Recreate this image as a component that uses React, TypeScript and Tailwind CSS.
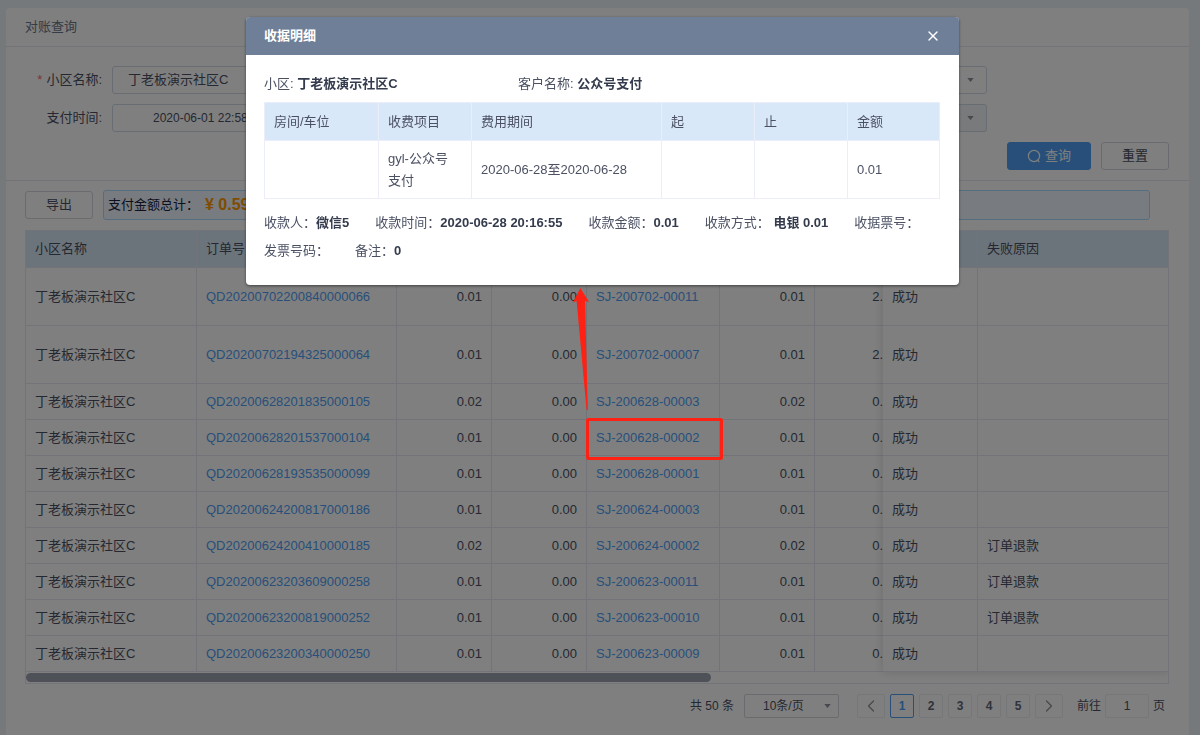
import { ChevronLeft, ChevronRight, X } from 'lucide-react';
import type { ReactNode } from 'react';
import { cva } from 'class-variance-authority';
import clsx from 'clsx';

type Order = {
    orderNo: string;
    amount: string;
    receiptNo: string;
    paid: string;
    fee: string;
    reason?: string;
    tall?: boolean;
};

const COMMUNITY = '丁老板演示社区C';

const orders: Order[] = [
    { orderNo: 'QD20200702200840000066', amount: '0.01', receiptNo: 'SJ-200702-00011', paid: '0.01', fee: '2.', tall: true },
    { orderNo: 'QD20200702194325000064', amount: '0.01', receiptNo: 'SJ-200702-00007', paid: '0.01', fee: '2.', tall: true },
    { orderNo: 'QD20200628201835000105', amount: '0.02', receiptNo: 'SJ-200628-00003', paid: '0.02', fee: '0.' },
    { orderNo: 'QD20200628201537000104', amount: '0.01', receiptNo: 'SJ-200628-00002', paid: '0.01', fee: '0.' },
    { orderNo: 'QD20200628193535000099', amount: '0.01', receiptNo: 'SJ-200628-00001', paid: '0.01', fee: '0.' },
    { orderNo: 'QD20200624200817000186', amount: '0.01', receiptNo: 'SJ-200624-00003', paid: '0.01', fee: '0.' },
    { orderNo: 'QD20200624200410000185', amount: '0.02', receiptNo: 'SJ-200624-00002', paid: '0.02', fee: '0.', reason: '订单退款' },
    { orderNo: 'QD20200623203609000258', amount: '0.01', receiptNo: 'SJ-200623-00011', paid: '0.01', fee: '0.', reason: '订单退款' },
    { orderNo: 'QD20200623200819000252', amount: '0.01', receiptNo: 'SJ-200623-00010', paid: '0.01', fee: '0.', reason: '订单退款' },
    { orderNo: 'QD20200623200340000250', amount: '0.01', receiptNo: 'SJ-200623-00009', paid: '0.01', fee: '0.' },
];

const buttonVariants = cva(
    'flex h-7 items-center justify-center rounded-[3px] border',
    {
        variants: {
            variant: {
                default: 'w-[68px] border-[#d4d7de] bg-white text-[#4b5163]',
                primary: 'w-[84px] gap-1 border-[#4f9ff5] bg-[#4f9ff5] text-white',
            },
        },
        defaultVariants: { variant: 'default' },
    },
);

const cellVariants = cva(
    'overflow-hidden border-b border-[#e6e9f2] font-normal whitespace-nowrap',
    {
        variants: {
            align: {
                left: 'border-r px-[9px] text-left',
                right: 'border-r px-[9px] text-right',
                edge: 'text-right',
            },
            size: { head: 'h-[37px] bg-[#d9e8f6]', normal: 'h-9', tall: 'h-[58px]' },
        },
        defaultVariants: { align: 'left', size: 'normal' },
    },
);

function rowSize(order: Order) {
    return order.tall ? 'tall' : 'normal';
}

function Caret({ className }: { className?: string }) {
    return (
        <svg
            viewBox="0 0 8 5"
            className={clsx('pointer-events-none absolute top-1/2 h-[4px] w-[7px] -translate-y-1/2', className)}
        >
            <path d="M0 0h8L4 5z" fill="#8d929c" />
        </svg>
    );
}

function QueryForm() {
    return (
        <form className="border-b border-[#e6e9ee] pt-[19px] pr-5 pb-[10px] pl-[19px]">
            <div className="flex flex-col gap-[10px] pr-[182px]">
                <div className="flex items-center gap-[10px]">
                    <label htmlFor="community" className="w-[77px] text-right">
                        <span className="mr-1 text-[#f56c6c]">*</span>
                        小区名称:
                    </label>
                    <select
                        id="community"
                        className="h-7 min-w-0 flex-1 appearance-none rounded-[3px] border border-[#cfdae4] bg-white pl-[15px]"
                    >
                        <option>{COMMUNITY}</option>
                    </select>
                    <div className="relative flex flex-1">
                        <select
                            aria-label="支付状态"
                            className="h-7 w-full appearance-none rounded-[3px] border border-[#cfdae4] bg-white"
                        />
                        <Caret className="right-[13px]" />
                    </div>
                </div>

                <div className="flex items-center gap-[10px]">
                    <label htmlFor="pay-time" className="w-[77px] text-right">
                        支付时间:
                    </label>
                    <input
                        id="pay-time"
                        readOnly
                        value="2020-06-01 22:58"
                        className="h-7 min-w-0 flex-1 rounded-[3px] border border-[#cfdae4] bg-white pl-10 text-xs"
                    />
                    <div className="relative flex flex-1">
                        <select
                            disabled
                            aria-label="支付方式"
                            className="h-7 w-full appearance-none rounded-[3px] border border-[#cfdae4] bg-[#f2f4f7]"
                        />
                        <Caret className="right-[13px]" />
                    </div>
                </div>
            </div>

            <div className="mt-[10px] flex justify-end gap-[10px]">
                <button type="button" className={buttonVariants({ variant: 'primary' })}>
                    <svg viewBox="0 0 14 14" className="size-[14px]" fill="none" stroke="currentColor" strokeWidth="1.2">
                        <circle cx="7" cy="7" r="5.6" />
                        <path d="M10.2 10.6l2 2.4" />
                    </svg>
                    查询
                </button>
                <button type="button" className={buttonVariants()}>
                    重置
                </button>
            </div>
        </form>
    );
}

function OrdersTable() {
    return (
        <div className="mt-[10px] border border-[#e6e9f2]">
            <div className="flex">
                <div className="min-w-0 flex-1">
                    <table className="w-full table-fixed border-separate border-spacing-0">
                        <colgroup>
                            <col className="w-[171px]" />
                            <col className="w-[200px]" />
                            <col className="w-[95px]" />
                            <col className="w-[95px]" />
                            <col className="w-[133px]" />
                            <col className="w-[95px]" />
                            <col />
                        </colgroup>
                        <thead>
                            <tr>
                                <th className={cellVariants({ size: 'head' })}>小区名称</th>
                                <th className={cellVariants({ size: 'head' })}>订单号</th>
                                <th className={cellVariants({ size: 'head' })} />
                                <th className={cellVariants({ size: 'head' })} />
                                <th className={cellVariants({ size: 'head' })} />
                                <th className={cellVariants({ size: 'head' })} />
                                <th className={cellVariants({ size: 'head', align: 'edge' })} />
                            </tr>
                        </thead>
                        <tbody>
                            {orders.map((order) => {
                                const size = rowSize(order);

                                return (
                                    <tr key={order.orderNo}>
                                        <td className={cellVariants({ size })}>{COMMUNITY}</td>
                                        <td className={cellVariants({ size })}>
                                            <a href="#order" className="text-[#4f9ff5]">
                                                {order.orderNo}
                                            </a>
                                        </td>
                                        <td className={cellVariants({ size, align: 'right' })}>{order.amount}</td>
                                        <td className={cellVariants({ size, align: 'right' })}>0.00</td>
                                        <td className={cellVariants({ size })}>
                                            <a href="#receipt" className="text-[#4f9ff5]">
                                                {order.receiptNo}
                                            </a>
                                        </td>
                                        <td className={cellVariants({ size, align: 'right' })}>{order.paid}</td>
                                        <td className={cellVariants({ size, align: 'edge' })}>{order.fee}</td>
                                    </tr>
                                );
                            })}
                        </tbody>
                    </table>
                </div>

                {/* columns pinned to the right edge */}
                <div className="w-[285px] shadow-[0_0_10px_rgba(0,0,0,0.15)] [clip-path:inset(0_0_-12px_-12px)]">
                    <table className="w-full table-fixed border-separate border-spacing-0">
                        <colgroup>
                            <col className="w-[95px]" />
                            <col />
                        </colgroup>
                        <thead>
                            <tr>
                                <th className={cellVariants({ size: 'head' })} />
                                <th className={clsx(cellVariants({ size: 'head' }), 'border-r-0')}>失败原因</th>
                            </tr>
                        </thead>
                        <tbody>
                            {orders.map((order) => (
                                <tr key={order.orderNo}>
                                    <td className={cellVariants({ size: rowSize(order) })}>成功</td>
                                    <td className={clsx(cellVariants({ size: rowSize(order) }), 'border-r-0')}>
                                        {order.reason}
                                    </td>
                                </tr>
                            ))}
                        </tbody>
                    </table>
                </div>
            </div>

            <div className="h-[11px] pt-px">
                <div className="h-[9px] w-3/5 rounded-full bg-[#9da3b1]" />
            </div>
        </div>
    );
}

const pagerButton = 'flex h-6 items-center justify-center rounded-[2px] border';

function Pagination() {
    return (
        <nav className="mt-[10px] flex items-center justify-end pr-1 text-xs">
            <span>共 50 条</span>
            <div className="relative ml-[10px] flex">
                <select
                    aria-label="每页条数"
                    className="h-6 w-[95px] appearance-none rounded-[2px] border border-[#d4d7de] bg-white pl-[18px]"
                >
                    <option>10条/页</option>
                </select>
                <Caret className="right-2" />
            </div>

            <div className="ml-[18px] flex gap-[5px] font-bold">
                <button type="button" aria-label="上一页" className={clsx(pagerButton, 'w-7 border-[#eceef2]')}>
                    <ChevronLeft className="size-5 text-[#8d929c]" strokeWidth={1.5} />
                </button>
                {[1, 2, 3, 4, 5].map((page) => (
                    <button
                        key={page}
                        type="button"
                        className={clsx(
                            pagerButton,
                            'w-6',
                            page === 1 ? 'border-[#4f9ff5] text-[#4f9ff5]' : 'border-[#eceef2] text-[#606778]',
                        )}
                    >
                        {page}
                    </button>
                ))}
                <button type="button" aria-label="下一页" className={clsx(pagerButton, 'w-7 border-[#eceef2]')}>
                    <ChevronRight className="size-5 text-[#8d929c]" strokeWidth={1.5} />
                </button>
            </div>

            <label htmlFor="page" className="ml-[14px]">
                前往
            </label>
            <input
                id="page"
                defaultValue="1"
                className="mx-1 h-6 w-11 rounded-[2px] border border-[#eceef2] bg-white text-center"
            />
            <span>页</span>
        </nav>
    );
}

function Field({ label, children }: { label: string; children?: ReactNode }) {
    return (
        <span className="whitespace-nowrap">
            {label}
            {children && <b className="text-[#343b4d]">{children}</b>}
        </span>
    );
}

const receiptHead = 'h-[38px] border-r border-b border-[#ebeef8] pl-[9px] text-left font-normal';
const receiptCell = 'h-[58px] border-r border-b border-[#ebeef8] pr-4 pl-[9px]';

function ReceiptDialog() {
    return (
        <div className="fixed inset-0 flex items-start justify-center bg-black/50 pt-[17px] pl-[5px]">
            <section
                role="dialog"
                aria-labelledby="receipt-title"
                className="w-[713px] overflow-hidden rounded-[4px] bg-white pb-5 text-[#4b5163] shadow-[0_1px_3px_rgba(0,0,0,0.5)]"
            >
                <header className="flex h-[38px] items-center justify-between bg-[#707f98] px-[18px] text-white">
                    <h2 id="receipt-title" className="font-bold">
                        收据明细
                    </h2>
                    <button type="button" aria-label="关闭">
                        <X className="size-4" strokeWidth={2} />
                    </button>
                </header>

                <div className="pt-[19px] pr-[19px] pl-[18px]">
                    <div className="flex h-5 items-center">
                        <div className="w-[254px]">
                            小区: <b className="text-[#343b4d]">{COMMUNITY}</b>
                        </div>
                        <div>
                            客户名称: <b className="text-[#343b4d]">公众号支付</b>
                        </div>
                    </div>

                    <table className="mt-2 w-full table-fixed border-separate border-spacing-0 border-t border-l border-[#ebeef8] leading-[22px]">
                        <colgroup>
                            <col className="w-[114px]" />
                            <col className="w-[93px]" />
                            <col className="w-[190px]" />
                            <col className="w-[93px]" />
                            <col className="w-[93px]" />
                            <col />
                        </colgroup>
                        <thead className="bg-[#d9e8f8]">
                            <tr>
                                <th className={receiptHead}>房间/车位</th>
                                <th className={receiptHead}>收费项目</th>
                                <th className={receiptHead}>费用期间</th>
                                <th className={receiptHead}>起</th>
                                <th className={receiptHead}>止</th>
                                <th className={receiptHead}>金额</th>
                            </tr>
                        </thead>
                        <tbody>
                            <tr>
                                <td className={receiptCell} />
                                <td className={receiptCell}>gyl-公众号支付</td>
                                <td className={receiptCell}>2020-06-28至2020-06-28</td>
                                <td className={receiptCell} />
                                <td className={receiptCell} />
                                <td className={receiptCell}>0.01</td>
                            </tr>
                        </tbody>
                    </table>

                    <div className="mt-[10px] flex flex-wrap gap-x-[26px] leading-7">
                        <Field label="收款人：">微信5</Field>
                        <Field label="收款时间：">2020-06-28 20:16:55</Field>
                        <Field label="收款金额：">0.01</Field>
                        <Field label="收款方式： ">电银 0.01</Field>
                        <Field label="收据票号：" />
                        <Field label="发票号码：" />
                        <Field label="备注：">0</Field>
                    </div>
                </div>
            </section>
        </div>
    );
}

function Callout() {
    return (
        <svg
            className="pointer-events-none absolute top-[286px] left-[568px] h-[176px] w-[158px]"
            viewBox="0 0 158 176"
        >
            <path d="M12.3 2 L5 16.5 L8.6 15 L18.6 124 L19.8 124 L17 15 L21 16 Z" fill="#ff2113" />
            <rect x="19.5" y="133.5" width="134" height="39" rx="1" fill="none" stroke="#ff2113" strokeWidth="3" />
        </svg>
    );
}

export default function App() {
    return (
        <div className="relative flex min-h-screen bg-[#ebf2f8] pt-2 pr-[11px] pl-1.5 font-['Liberation_Sans','Noto_Sans_CJK_SC',sans-serif] text-[13px] leading-5 text-[#4b5163]">
            <main className="min-w-0 flex-1 rounded-t-[4px] bg-white">
                <h1 className="flex h-[39px] items-center border-b border-[#e6e9ee] px-[19px] text-[#6c7689]">
                    对账查询
                </h1>

                <QueryForm />

                <div className="pt-[9px] pr-5 pl-[19px]">
                    <div className="flex items-center gap-[10px] pr-[19px]">
                        <button type="button" className={buttonVariants()}>
                            导出
                        </button>
                        <div className="flex h-[30px] flex-1 items-center rounded-[3px] border border-[#abdcff] bg-[#f0f6ff] px-1 text-[#17233d]">
                            支付金额总计：
                            <b className="ml-1.5 text-base text-[#ff9900]">¥ 0.59</b>
                        </div>
                    </div>

                    <OrdersTable />
                    <Pagination />
                </div>
            </main>

            <ReceiptDialog />
            <Callout />
        </div>
    );
}
